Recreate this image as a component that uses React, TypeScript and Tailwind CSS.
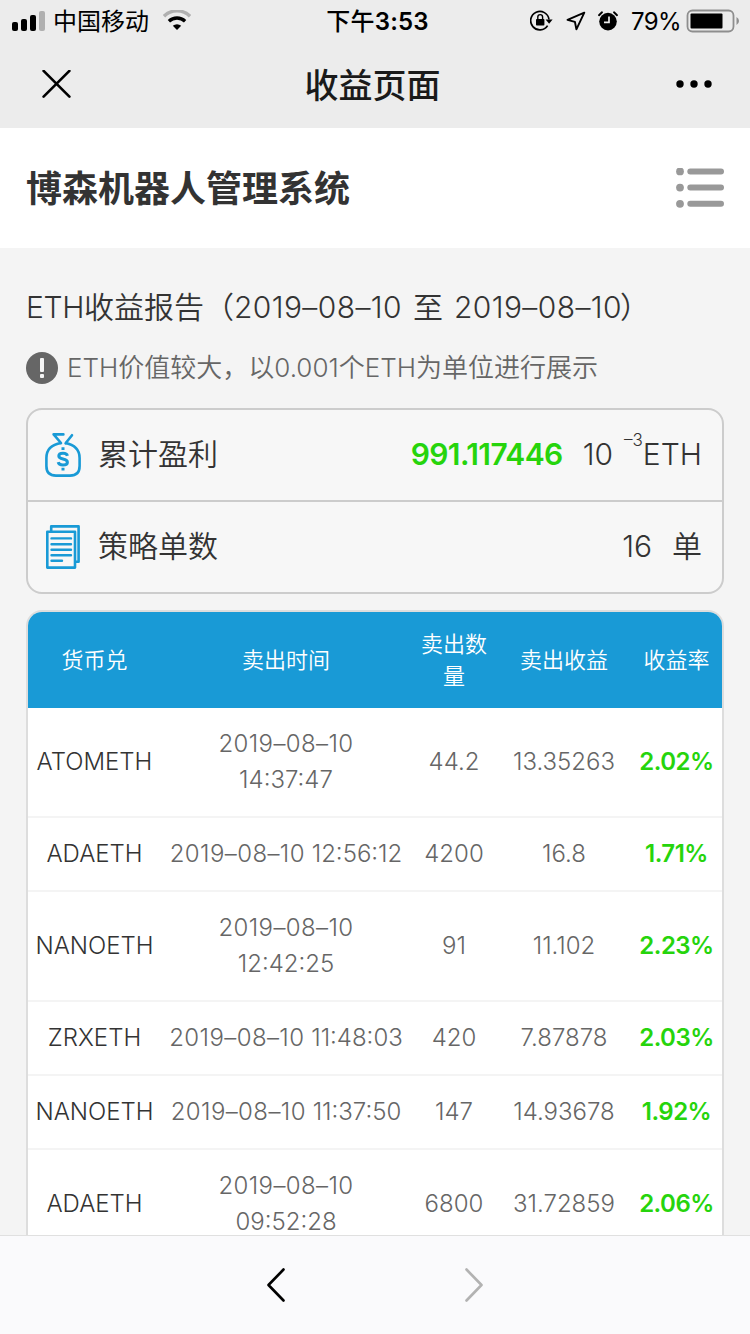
import type { ReactNode } from "react"

interface Order {
  pair: string
  date: string
  time: string
  wrap: boolean
  amount: string
  profit: string
  rate: string
}

const ORDERS: Order[] = [
  { pair: "ATOMETH", date: "2019–08–10", time: "14:37:47", wrap: true, amount: "44.2", profit: "13.35263", rate: "2.02%" },
  { pair: "ADAETH", date: "2019–08–10", time: "12:56:12", wrap: false, amount: "4200", profit: "16.8", rate: "1.71%" },
  { pair: "NANOETH", date: "2019–08–10", time: "12:42:25", wrap: true, amount: "91", profit: "11.102", rate: "2.23%" },
  { pair: "ZRXETH", date: "2019–08–10", time: "11:48:03", wrap: false, amount: "420", profit: "7.87878", rate: "2.03%" },
  { pair: "NANOETH", date: "2019–08–10", time: "11:37:50", wrap: false, amount: "147", profit: "14.93678", rate: "1.92%" },
  { pair: "ADAETH", date: "2019–08–10", time: "09:52:28", wrap: true, amount: "6800", profit: "31.72859", rate: "2.06%" },
]

const COLUMNS = "grid grid-cols-[133px_250px_86px_134px_91px] items-center text-center"

function StatusBar() {
  return (
    <div className="flex h-10 shrink-0 items-center justify-between pl-3 pr-[10px] pt-px text-black">
      <div className="flex w-[304px] items-center">
        <svg width="34" height="22" viewBox="0 0 34 22">
          <rect x="0" y="12" width="6" height="9" rx="2" />
          <rect x="9" y="9" width="6" height="12" rx="2" />
          <rect x="18" y="5" width="6" height="16" rx="2" />
          <rect x="27" y="1" width="6" height="20" rx="2" fill="#b0b0b0" />
        </svg>
        <span className="ml-[7px] mt-0.5 text-2xl leading-[38px]">中国移动</span>
        <svg className="ml-[14px]" width="28" height="21" viewBox="0 0 28 21" fill="none">
          <path d="M1 6.2 A18.5 18.5 0 0 1 27 6.2" stroke="#b0b0b0" strokeWidth="3.4" />
          <path d="M5.9 11.2 A12 12 0 0 1 22.1 11.2" stroke="#000" strokeWidth="3.4" />
          <path d="M14 20 L9.8 15.8 A6.4 6.4 0 0 1 18.2 15.8 Z" fill="#000" />
        </svg>
      </div>
      <div className="mt-0.5 text-2xl font-semibold leading-[38px] tracking-[0.2px]">
        <span className="font-medium">下午</span>3:53
      </div>
      <div className="flex w-[301px] items-center justify-end">
        <svg width="23" height="21" viewBox="0 0 23 21" fill="none">
          <path d="M17.6 15.6 A9.2 9.2 0 1 1 19 9.5" stroke="#000" strokeWidth="1.7" />
          <path d="M15.6 9.6 H22.6 L19.1 13.8 Z" fill="#000" />
          <rect x="6" y="9" width="8.4" height="6.6" rx="0.8" fill="#000" />
          <path d="M7.8 9.5 V7 A2.4 2.4 0 0 1 12.6 7 V9.5" stroke="#000" strokeWidth="1.4" />
        </svg>
        <svg className="ml-[13px]" width="20" height="20" viewBox="0 0 20 20" fill="none">
          <path d="M18.3 1.6 L1.5 8.8 L8.9 10.8 L10.4 18.4 Z" stroke="#000" strokeWidth="1.9" strokeLinejoin="round" />
        </svg>
        <svg className="ml-3" width="20" height="20" viewBox="0 0 20 20" fill="none">
          <circle cx="10" cy="10.6" r="8.8" fill="#000" />
          <path d="M1 4.2 L4 1.3 M19 4.2 L16 1.3" stroke="#000" strokeWidth="1.9" strokeLinecap="round" />
          <path d="M11 5.6 V11.4 H6" stroke="#ececec" strokeWidth="1.7" />
        </svg>
        <span className="ml-[13px] mt-0.5 text-[24px] leading-[38px] tracking-[-0.6px]">79%</span>
        <svg className="ml-[5px]" width="54" height="24" viewBox="0 0 54 24">
          <rect x="1.5" y="1.5" width="46" height="21" rx="5" fill="none" stroke="#8e8e8e" strokeWidth="1.8" />
          <rect x="4.5" y="4.5" width="32" height="15" rx="1" />
          <path d="M50.5 8 Q53 9.5 53 12 Q53 14.5 50.5 16 Z" fill="#8e8e8e" />
        </svg>
      </div>
    </div>
  )
}

function NavBar() {
  return (
    <div className="flex h-[88px] shrink-0 items-center justify-between pl-[42px] pr-[38px]">
      <svg width="29" height="29" viewBox="0 0 29 29" stroke="#000" strokeWidth="2.6" strokeLinecap="round">
        <path d="M1.6 0.9 L27.4 26.7 M27.4 0.9 L1.6 26.7" />
      </svg>
      <h1 className="mr-0.5 pt-[3px] text-[34px] font-medium leading-[85px] text-[#1a1a1a]">收益页面</h1>
      <svg width="36" height="8" viewBox="0 0 36 8">
        <circle cx="4" cy="4" r="3.7" />
        <circle cx="18" cy="4" r="3.7" />
        <circle cx="32" cy="4" r="3.7" />
      </svg>
    </div>
  )
}

function MenuIcon() {
  return (
    <svg width="48" height="40" viewBox="0 0 48 40" fill="#999">
      <circle cx="4" cy="3.4" r="3.9" />
      <rect x="11.3" y="0.4" width="36.7" height="6" rx="3" />
      <circle cx="4" cy="19.6" r="3.9" />
      <rect x="11.3" y="16.6" width="36.7" height="6" rx="3" />
      <circle cx="4" cy="35.8" r="3.9" />
      <rect x="11.3" y="32.8" width="36.7" height="6" rx="3" />
    </svg>
  )
}

function MoneyBagIcon() {
  return (
    <svg width="36" height="44" viewBox="0 0 36 44" fill="none" stroke="#199ad6" strokeWidth="2.6">
      <path d="M16.2 10 C6.5 11.5 1.4 17 1.4 25 V33 Q1.4 42.6 11 42.6 H25 Q34.6 42.6 34.6 33 V25 C34.6 17 30 11.8 20 10" />
      <path d="M18.4 1.4 H8.6 L16 10" strokeLinecap="round" strokeLinejoin="round" />
      <path d="M27 2.2 L20.6 10.2" strokeLinecap="round" />
      <path
        d="M22.4 22.8 C22 21 20.4 20.2 18 20.2 C15.4 20.2 13.8 21.2 13.8 23 C13.8 25 15.4 25.5 18 26 C20.8 26.5 22.4 27.2 22.4 29.2 C22.4 31 20.8 32 18 32 C15.3 32 13.6 31 13.2 29.2"
        strokeWidth="3"
      />
      <path d="M18 14.2 V17 M18 34.8 V37.6" strokeWidth="3" />
    </svg>
  )
}

function DocumentIcon() {
  return (
    <svg width="34" height="44" viewBox="0 0 34 44" fill="none" stroke="#199ad6" strokeWidth="2.6" strokeLinejoin="round">
      <path d="M5.2 6.5 V1.4 H32.6 V36.8 H29" />
      <rect x="1.3" y="6.8" width="27.7" height="35.8" />
      <path d="M5.5 13.4 H25 M5.5 19.2 H25 M5.5 24.8 H25 M5.5 30.2 H25 M5.5 35.8 H16" strokeLinecap="round" strokeWidth="2.4" />
    </svg>
  )
}

function SummaryRow({ icon, label, children }: { icon: ReactNode; label: string; children: ReactNode }) {
  return (
    <div className="box-content flex h-[88px] items-center pb-0.5 text-[30px] text-[#333]">
      <div className="ml-[17px] mt-0.5 flex w-9 justify-center">{icon}</div>
      <span className="ml-[17px] font-[350]">{label}</span>
      <div className="ml-auto mr-5 flex items-center font-light">{children}</div>
    </div>
  )
}

export default function App() {
  return (
    <div className="flex h-[1334px] w-[750px] flex-col overflow-hidden bg-[#f4f4f4] font-['Inter','Noto_Sans_CJK_SC',sans-serif]">
      <div className="bg-[#ececec]">
        <StatusBar />
        <NavBar />
      </div>

      <header className="flex h-[120px] shrink-0 items-center justify-between bg-white pl-[26px] pr-[26px]">
        <h2 className="pt-0.5 text-[36px] font-bold leading-[118px] text-[#333]">博森机器人管理系统</h2>
        <MenuIcon />
      </header>

      <main className="min-h-0 flex-1 overflow-hidden px-[26px] pt-9">
        <h3 className="h-[46px] whitespace-nowrap text-[30px] font-[350] leading-[46px] text-[#333]">
          <span className="tracking-[-0.4px]">ETH</span>收益报告（<span className="tracking-[0.4px]">2019–08–10</span>
          <span className="mx-[11px]">至</span>
          <span className="tracking-[0.4px]">2019–08–10</span>
          <span className="-ml-0.5">）</span>
        </h3>

        <div className="mt-[18px] flex h-10 items-center text-[26px] font-[330] leading-10 text-[#666]">
          <svg width="32" height="32" viewBox="0 0 32 32">
            <circle cx="16" cy="16" r="16" fill="#666" />
            <rect x="14" y="6" width="4" height="14" rx="1" fill="#f4f4f4" />
            <rect x="14" y="22" width="4" height="4" rx="1" fill="#f4f4f4" />
          </svg>
          <span className="ml-[9px] whitespace-nowrap">ETH价值较大，以0.001个ETH为单位进行展示</span>
        </div>

        {/* Totals */}
        <section className="mt-5 divide-y-2 divide-[#ccc] rounded-2xl border-2 border-[#ccc] bg-[#f7f7f7]">
          <SummaryRow icon={<MoneyBagIcon />} label="累计盈利">
            <span className="font-semibold tracking-[-0.6px] text-[#26d40c]">991.117446</span>
            <span className="ml-5">10</span>
            <sup className="top-0 ml-[11px] -mt-7 text-[17px]">–3</sup>
            <span>ETH</span>
          </SummaryRow>
          <SummaryRow icon={<DocumentIcon />} label="策略单数">
            <span>16</span>
            <span className="ml-5 font-[350]">单</span>
          </SummaryRow>
        </section>

        {/* Sell orders */}
        <section className="mt-4 overflow-hidden rounded-t-2xl border-2 border-[#ddd] bg-white">
          <div className={`${COLUMNS} h-24 bg-[#199ad6] text-[22px] font-[350] leading-8 text-white`}>
            <span>货币兑</span>
            <span>卖出时间</span>
            <span className="px-2">卖出数量</span>
            <span>卖出收益</span>
            <span>收益率</span>
          </div>
          {ORDERS.map((order, i) => (
            <div
              key={i}
              className={`${COLUMNS} border-b-2 border-[#f4f4f4] py-[18px] text-2xl font-light leading-9 text-[#666]`}
            >
              <span className="text-[#333]">{order.pair}</span>
              <span className="whitespace-nowrap">
                <span className="tracking-[0.4px]">{order.date}</span>
                {order.wrap ? <br /> : " "}
                {order.time}
              </span>
              <span>{order.amount}</span>
              <span>{order.profit}</span>
              <span className="font-semibold tracking-[-0.5px] text-[#26d40c]">{order.rate}</span>
            </div>
          ))}
        </section>
      </main>

      <footer className="flex h-[99px] shrink-0 items-center justify-center gap-[180px] border-t border-[#e0e0e0] bg-[#fafafc]">
        <svg width="18" height="34" viewBox="0 0 18 34" fill="none" stroke="#000" strokeWidth="2.6" strokeLinecap="round" strokeLinejoin="round">
          <path d="M16.5 1.5 L1.5 17 L16.5 32.5" />
        </svg>
        <svg width="18" height="34" viewBox="0 0 18 34" fill="none" stroke="#b2b2b2" strokeWidth="2.6" strokeLinecap="round" strokeLinejoin="round">
          <path d="M1.5 1.5 L16.5 17 L1.5 32.5" />
        </svg>
      </footer>
    </div>
  )
}
